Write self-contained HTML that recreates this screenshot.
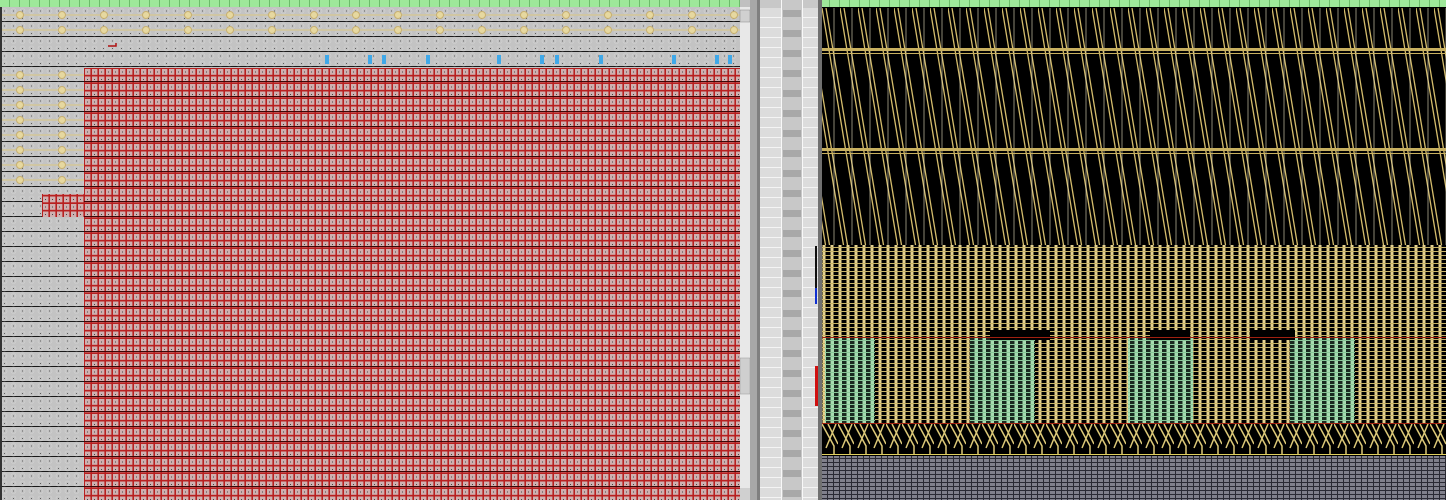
<!DOCTYPE html>
<html><head><meta charset="utf-8"><style>
html,body{margin:0;padding:0;background:#c0c0c0;overflow:hidden}
svg{display:block}
</style></head><body>
<svg width="1446" height="500" xmlns="http://www.w3.org/2000/svg">
<defs>
<pattern id="grn" x="0" y="0" width="10" height="7" patternUnits="userSpaceOnUse">
<rect width="10" height="7" fill="#9ee89a"/><rect x="9" width="1" height="7" fill="#6cbc6a"/></pattern>
<pattern id="grow" x="0" y="7" width="740" height="15" patternUnits="userSpaceOnUse">
<rect width="740" height="15" fill="#c3c3c3"/><rect y="14" width="740" height="1.4" fill="#1a1a1a"/></pattern>
<pattern id="rline" x="0" y="7" width="740" height="15" patternUnits="userSpaceOnUse">
<rect y="14" width="740" height="1.2" fill="#3a0808"/></pattern>
<pattern id="dots" x="0" y="0" width="9" height="7.5" patternUnits="userSpaceOnUse">
<rect x="4" y="3" width="1" height="1" fill="#333"/><circle cx="4.5" cy="3.5" r="2.5" fill="none" stroke="#d8d8d8" stroke-width=".6"/></pattern>
<pattern id="yel" x="0" y="7" width="42" height="15" patternUnits="userSpaceOnUse">
<path d="M0 8 H42" stroke="#d8c890" stroke-width="1.2"/>
<circle cx="20" cy="8" r="3.5" fill="#e6d8a0" stroke="#c8b070"/></pattern>
<pattern id="red" x="84" y="68" width="7" height="7.5" patternUnits="userSpaceOnUse">
<rect width="7" height="7.5" fill="#b82020"/><rect x="1" y="1" width="5.4" height="5.8" fill="#cfb0b0"/><rect x="3" y="3.5" width="1" height="1" fill="#444"/></pattern>
<pattern id="mid" x="760" y="8" width="60" height="10" patternUnits="userSpaceOnUse">
<rect width="60" height="10" fill="#dcdcdc"/><rect y="9" width="60" height="1" fill="#f4f4f4"/>
<rect x="22" width="20" height="10" fill="#c8c8c8"/></pattern>
<pattern id="mid2" x="760" y="8" width="60" height="20" patternUnits="userSpaceOnUse">
<rect x="23" y="2" width="18" height="7" fill="#a8a8a8"/></pattern>
<pattern id="diag" x="822" y="8" width="18" height="240" patternUnits="userSpaceOnUse">
<path d="M0 0 L40 240 M4 0 L44 240 M-18 0 L22 240 M-14 0 L26 240 M-36 0 L4 240 M-32 0 L8 240" stroke="#d4bc6c" stroke-width="1.3" fill="none"/>
<path d="M12 0 V240" stroke="#e8e0c0" stroke-width="1.2" opacity=".5"/></pattern>
<pattern id="vert" x="822" y="245" width="8" height="4" patternUnits="userSpaceOnUse">
<rect width="8" height="4" fill="#000"/><rect x="0.5" width="3" height="4" fill="#e6d290"/>
<rect x="0" y="2" width="8" height="1" fill="#c8b468"/></pattern>
<pattern id="vgrn" x="822" y="338" width="8" height="4" patternUnits="userSpaceOnUse">
<rect width="8" height="4" fill="#1a2a20"/><rect x="0.5" width="3.5" height="4" fill="#a6dcb0"/>
<rect y="2" width="8" height="1" fill="#88c898"/></pattern>
<pattern id="cross" x="822" y="424" width="16" height="30" patternUnits="userSpaceOnUse">
<path d="M0 0 L12 22 V30 M6 0 L16 20 M14 0 L4 24" stroke="#dcc878" stroke-width="1.5" fill="none"/></pattern>
<pattern id="gry" x="822" y="455" width="6" height="4" patternUnits="userSpaceOnUse">
<rect width="6" height="4" fill="#2a2a34"/><rect width="5" height="3" fill="#80808c"/></pattern>
</defs>
<rect width="1446" height="7" fill="url(#grn)"/>
<rect x="740" width="82" height="7" fill="#c0c0c0"/>
<rect x="0" y="7" width="740" height="493" fill="url(#grow)"/>
<rect x="0" y="7" width="740" height="493" fill="url(#dots)" opacity=".7"/>
<rect x="0" y="7" width="740" height="30" fill="url(#yel)"/>
<rect x="0" y="67" width="84" height="120" fill="url(#yel)"/>
<rect x="0" y="7" width="2" height="493" fill="#333"/>
<path d="M108 46 h8 v-3" stroke="#b01010" stroke-width="1.5" fill="none"/>
<g fill="#40a8e8">
<rect x="325" y="55" width="4" height="9"/><rect x="368" y="55" width="4" height="9"/><rect x="382" y="55" width="4" height="9"/>
<rect x="426" y="55" width="4" height="9"/><rect x="497" y="55" width="4" height="9"/><rect x="540" y="55" width="4" height="9"/>
<rect x="555" y="55" width="4" height="9"/><rect x="599" y="55" width="4" height="9"/><rect x="672" y="55" width="4" height="9"/>
<rect x="715" y="55" width="4" height="9"/><rect x="728" y="55" width="4" height="9"/></g>
<rect x="84" y="68" width="656" height="432" fill="url(#red)"/>
<rect x="42" y="194" width="42" height="23" fill="url(#red)"/>
<rect x="84" y="68" width="656" height="432" fill="url(#rline)"/>
<rect x="740" y="7" width="10" height="493" fill="#e8e8e8"/>
<rect x="740" y="10" width="10" height="12" fill="#d0d0d0" stroke="#888" stroke-width=".5"/>
<rect x="740" y="358" width="10" height="36" fill="#cfcfcf" stroke="#999" stroke-width=".5"/>
<rect x="740" y="488" width="10" height="12" fill="#d0d0d0"/>
<rect x="750" y="0" width="10" height="500" fill="#a8a8a8"/>
<rect x="757" y="0" width="3" height="500" fill="#808080"/>
<rect x="760" y="0" width="60" height="8" fill="#c8c8c8"/>
<rect x="760" y="8" width="60" height="492" fill="url(#mid)"/>
<rect x="760" y="8" width="60" height="492" fill="url(#mid2)"/>
<rect x="781" y="0" width="1" height="500" fill="#f8f8f8"/><rect x="802" y="0" width="1" height="500" fill="#f8f8f8"/>
<rect x="815" y="246" width="2" height="58" fill="#111"/>
<rect x="815" y="288" width="2" height="16" fill="#1030d0"/>
<rect x="815" y="366" width="3" height="40" fill="#d01010"/>
<rect x="818" y="0" width="4" height="500" fill="#707070"/>
<rect x="822" y="7" width="624" height="493" fill="#000"/>
<rect x="822" y="8" width="624" height="240" fill="url(#diag)"/>
<g fill="#c8b060"><rect x="822" y="48" width="624" height="3"/><rect x="822" y="53" width="624" height="1"/>
<rect x="822" y="148" width="624" height="3"/><rect x="822" y="153" width="624" height="1"/></g>
<rect x="822" y="245" width="624" height="93" fill="url(#vert)"/>
<rect x="822" y="338" width="624" height="85" fill="url(#vert)"/>
<g fill="url(#vgrn)"><rect x="825" y="338" width="50" height="85"/><rect x="970" y="338" width="65" height="85"/>
<rect x="1128" y="338" width="65" height="85"/><rect x="1290" y="338" width="65" height="85"/></g>
<g fill="#000"><rect x="990" y="330" width="60" height="10"/><rect x="1150" y="330" width="40" height="10"/><rect x="1250" y="330" width="45" height="10"/></g>
<rect x="822" y="337" width="624" height="1" fill="#a02010"/>
<rect x="822" y="423" width="624" height="1" fill="#a02010"/>
<rect x="822" y="424" width="624" height="30" fill="url(#cross)"/>
<rect x="822" y="454" width="624" height="1" fill="#e0d060"/>
<rect x="822" y="456" width="624" height="44" fill="url(#gry)"/>
</svg>
</body></html>
